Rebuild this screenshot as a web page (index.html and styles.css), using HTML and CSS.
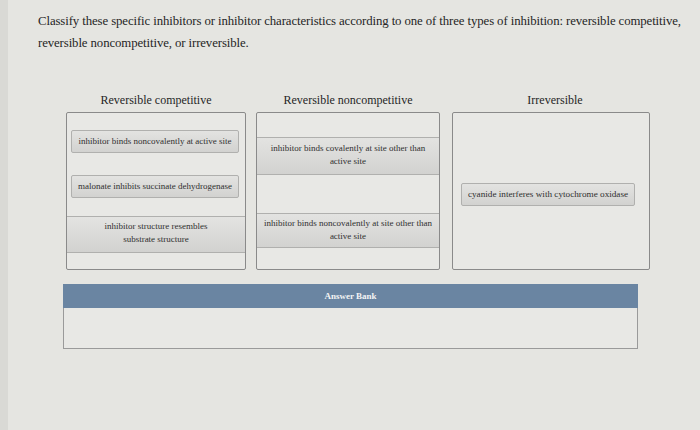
FILE: index.html
```html
<!DOCTYPE html>
<html lang="en">
<head>
    <meta charset="UTF-8">
    <meta name="viewport" content="width=device-width, initial-scale=1.0">
    <title>Classify Inhibitors</title>
    <link rel="stylesheet" href="styles.css">
</head>
<body>
  <div class="screen">
    <div class="page">
        <p class="question">Classify these specific inhibitors or inhibitor characteristics according to one of three types of inhibition: reversible competitive, reversible noncompetitive, or irreversible.</p>

        <!-- Drop bins -->
        <div class="bins">
            <div class="bin bin-1">
                <div class="bin-title">Reversible competitive</div>
                <div class="bin-box">
                    <div class="chip chip-small first">inhibitor binds noncovalently at active site</div>
                    <div class="chip chip-small second">malonate inhibits succinate dehydrogenase</div>
                    <div class="chip chip-wide third">inhibitor structure resembles<br>substrate structure</div>
                </div>
            </div>
            <div class="bin bin-2">
                <div class="bin-title">Reversible noncompetitive</div>
                <div class="bin-box">
                    <div class="chip chip-wide second-row">inhibitor binds covalently at site other than<br>active site</div>
                    <div class="chip chip-wide fourth-row">inhibitor binds noncovalently at site other than<br>active site</div>
                </div>
            </div>
            <div class="bin bin-3">
                <div class="bin-title">Irreversible</div>
                <div class="bin-box">
                    <div class="chip chip-small middle">cyanide interferes with cytochrome oxidase</div>
                </div>
            </div>
        </div>

        <!-- Answer bank -->
        <div class="bank">
            <div class="bank-header">Answer Bank</div>
            <div class="bank-body"></div>
        </div>
    </div>
  </div>
</body>
</html>
```

FILE: styles.css
```css
body {
    margin: 0;
    background: #d9d9d5;
    font-family: "Liberation Serif", "Times New Roman", serif;
    color: #262626;
}
.screen {
    margin-left: 8px;
    height: 430px;
    background: #e5e5e1;
}
.page {
    padding: 10px 20px 0 30px;
}
.question {
    margin: 0;
    width: 650px;
    font-size: 12.8px;
    line-height: 22px;
    letter-spacing: -0.1px;
}
.bins {
    display: grid;
    grid-template-columns: 180px 184px 200px;
    column-gap: 10px;
    margin: 37px 0 0 28px;
}
.bin-3 {
    margin-left: 2px;
}
.bin-title {
    text-align: center;
    font-size: 12px;
    height: 18px;
    line-height: 18px;
    margin-bottom: 3px;
}
.bin-3 .bin-title {
    padding-left: 8px;
}
.bin-box {
    height: 156px;
    border: 1px solid #8a8a8a;
    border-radius: 2px;
    background: #e8e8e5;
    display: flex;
    flex-direction: column;
}
.chip {
    background: linear-gradient(#e3e3e1, #d2d2d0);
    border: 1px solid #b0b0ae;
    border-radius: 2px;
    text-align: center;
    font-size: 9px;
    line-height: 13px;
    color: #303030;
}
.chip-small {
    margin: 0 6px 0 4px;
    padding: 4px 2px;
    white-space: nowrap;
}
.chip-wide {
    padding: 4px 2px;
    border-left: none;
    border-right: none;
    border-radius: 0;
}
.first {
    margin-top: 17px;
}
.second {
    margin-top: 22px;
}
.third {
    margin-top: 18px;
    padding: 3px 2px 6px;
}
.second-row {
    margin-top: 24px;
    padding: 4px 2px 6px;
}
.fourth-row {
    margin-top: 38px;
    padding: 3px 2px 4px;
}
.middle {
    margin: 70px 14px 0 8px;
    font-size: 9.2px;
}
.bank {
    width: 575px;
    margin: 14px 0 0 25px;
}
.bank-header {
    background: #6a85a2;
    color: #f4f4f4;
    text-align: center;
    font-size: 9px;
    font-weight: bold;
    height: 24px;
    line-height: 24px;
}
.bank-body {
    height: 40px;
    border: 1px solid #9a9a9a;
    border-top: none;
    background: #e8e8e5;
}
```
